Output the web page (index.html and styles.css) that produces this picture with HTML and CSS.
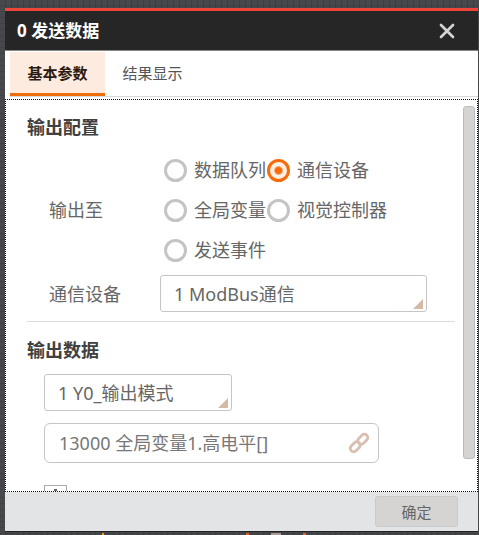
FILE: index.html
```html
<!DOCTYPE html>
<html lang="zh-CN">
<head>
<meta charset="utf-8">
<title>发送数据</title>
<link rel="stylesheet" href="styles.css">
</head>
<body>
<main class="dialog">
  <header class="titlebar">
    <h1>0 发送数据</h1>
    <button class="close" type="button" aria-label="关闭">
      <svg width="16" height="16" viewBox="0 0 16 16"><path d="M2 2 14 14M14 2 2 14" fill="none" stroke="#d6d4d2" stroke-width="2.700" stroke-linecap="round"/></svg>
    </button>
  </header>
  <nav class="tabs">
    <button class="tab active" type="button">基本参数</button>
    <button class="tab" type="button">结果显示</button>
  </nav>
  <section class="pane">
    <form class="content">
      <h2>输出配置</h2>
      <div class="row">
        <span class="label" id="target">输出至</span>
        <div class="radios" role="radiogroup" aria-labelledby="target">
          <label><input type="radio" name="to">数据队列</label>
          <label><input type="radio" name="to" checked>通信设备</label>
          <label><input type="radio" name="to">全局变量</label>
          <label><input type="radio" name="to">视觉控制器</label>
          <label><input type="radio" name="to">发送事件</label>
        </div>
      </div>
      <div class="row device">
        <label class="label" for="device">通信设备</label>
        <div class="select"><select id="device"><option>1 ModBus通信</option></select></div>
      </div>
      <hr>
      <h2>输出数据</h2>
      <div class="data">
        <div class="select mode"><select aria-label="输出模式"><option>1 Y0_输出模式</option></select></div>
        <div class="bound">
          <input type="text" aria-label="数据来源" value="13000 全局变量1.高电平[]">
          <button class="link" type="button" aria-label="绑定">
            <svg width="22" height="22" viewBox="0 0 22 22"><g transform="rotate(-45 11 11)" fill="none" stroke="#d8bfb0" stroke-width="2.800" stroke-linecap="round"><path d="M10.500 13.200A3.400 3.400 0 0 1 8 14.400H3.400A3.400 3.400 0 0 1 3.400 7.600H8A3.400 3.400 0 0 1 11.400 11"/><path d="M11.500 8.800A3.400 3.400 0 0 1 14 7.600H18.600A3.400 3.400 0 0 1 18.600 14.400H14A3.400 3.400 0 0 1 10.600 11"/></g></svg>
          </button>
        </div>
        <button class="add" type="button" aria-label="添加">
          <svg width="15" height="15" viewBox="0 0 15 15"><path d="M7.500 0V15M0 7.500H15" stroke="#666" stroke-width="3"/></svg>
        </button>
      </div>
    </form>
    <div class="scroll"><div class="thumb"></div></div>
  </section>
  <footer class="footer"><button class="ok" type="button">确定</button></footer>
</main>
</body>
</html>
```

FILE: styles.css
```css
* {
  box-sizing: border-box;
}

body {
  margin: 0;
  height: 100vh;
  padding: 8px 1px 3px 5px;
  font: 18px/24px "Noto Sans", "Noto Sans CJK SC", sans-serif;
  color: #666;
  background:
    linear-gradient(#f5a000, #f5a000) 102px 100% / 2px 2px no-repeat,
    linear-gradient(#e85a20, #e85a20) 246px 100% / 3px 2px no-repeat,
    linear-gradient(#a89c98, #a89c98) 271px 100% / 10px 2px no-repeat,
    linear-gradient(#e85a20, #e85a20) 303px 100% / 3px 2px no-repeat,
    repeating-linear-gradient(90deg, transparent 0 5px, #3d3e41 5px 6px),
    repeating-linear-gradient(#47484b 0 5px, #404144 5px 6px);
}

button,
input,
select {
  margin: 0;
  font: inherit;
  color: inherit;
}

button {
  padding: 0;
  border: 0;
  background: none;
}

svg {
  display: block;
}

.dialog {
  display: flex;
  flex-direction: column;
  height: 100%;
  background: #fff;
  border-bottom: 1px solid #222;
}

.titlebar {
  display: flex;
  flex: none;
  align-items: center;
  justify-content: space-between;
  height: 43px;
  padding: 0 23px 0 12px;
  background: #262626;
  border-top: 3px solid #f04438;
  border-bottom: 1px solid #888;
}

h1 {
  margin: 0;
  font-size: 17px;
  font-weight: 700;
  color: #fff;
}

.tabs {
  display: flex;
  flex: none;
  height: 46px;
  margin-left: 5px;
  padding-top: 1px;
  border-bottom: 1px solid #ddd8d8;
}

.tab {
  width: 95px;
  font-size: 15px;
  color: #555;
  border-bottom: 3px solid transparent;
}

.tab.active {
  font-weight: 700;
  color: #2c1a10;
  background: #fdebdf;
  border-bottom-color: #ee6c0a;
}

.pane {
  display: flex;
  flex: 1;
  min-height: 0;
  margin-top: 2px;
  overflow: hidden;
  border: 1px dotted #111;
}

.content {
  flex: 1;
  min-width: 0;
  padding: 15px 8px 0 21px;
}

h2 {
  margin: 0;
  font-size: 18px;
  line-height: 24px;
  font-weight: 700;
  color: #404040;
}

.row {
  display: grid;
  grid-template-columns: 111px 1fr;
  align-items: center;
  padding-left: 22px;
}

.row:first-of-type {
  margin-top: 11px;
}

.radios {
  display: grid;
  grid-template-columns: 103px 1fr;
  grid-auto-rows: 40px;
  padding-left: 4px;
}

.radios label {
  display: flex;
  align-items: center;
  gap: 7px;
  white-space: nowrap;
}

input[type="radio"] {
  appearance: none;
  flex: none;
  width: 23px;
  height: 23px;
  border: 3px solid #c4c4c4;
  border-radius: 50%;
}

input[type="radio"]:checked {
  border-color: #f96a08;
  background: radial-gradient(circle, #f96a08 0 3px, #fdf0e8 5px);
}

.device {
  margin-top: 5px;
  padding-right: 28px;
}

.select {
  position: relative;
}

.select::after {
  content: "";
  position: absolute;
  right: 4px;
  bottom: 3px;
  border: 5px solid;
  border-color: transparent #d5b9a6 #d5b9a6 transparent;
  pointer-events: none;
}

select,
.bound {
  width: 100%;
  height: 37px;
  border: 1px solid #c8c4c4;
  border-radius: 3px;
  background: #fff;
}

select {
  display: block;
  appearance: none;
  padding: 0 13px;
}

hr {
  height: 1px;
  margin: 9px 0 16px;
  border: 0;
  background: #dcdcdc;
}

.data {
  display: flex;
  flex-direction: column;
  align-items: flex-start;
  gap: 12px;
  margin-top: 12px;
  padding-left: 17px;
}

.mode {
  width: 188px;
}

.bound {
  display: flex;
  align-items: center;
  width: 335px;
  height: 40px;
  padding-right: 8px;
  border-radius: 6px;
}

.bound input {
  flex: 1;
  min-width: 0;
  padding: 0 14px;
  border: 0;
  background: none;
  color: #777;
}

.add {
  display: grid;
  place-items: center;
  width: 23px;
  height: 23px;
  margin-top: 10px;
  border: 1px solid #aaa;
}

.scroll {
  flex: none;
  width: 14px;
  padding: 6px 2px 32px 0;
}

.thumb {
  height: 100%;
  border: 1px solid #bcbcbc;
  border-radius: 3px;
  background: #d5d4d3;
}

.footer {
  display: flex;
  flex: none;
  align-items: center;
  justify-content: flex-end;
  height: 39px;
  padding-right: 20px;
  background: #e3e4e6;
}

.ok {
  width: 83px;
  height: 31px;
  font-size: 15px;
  border: 1px solid #c9cacc;
  border-radius: 3px;
  background: #d5d4d3;
}
```
